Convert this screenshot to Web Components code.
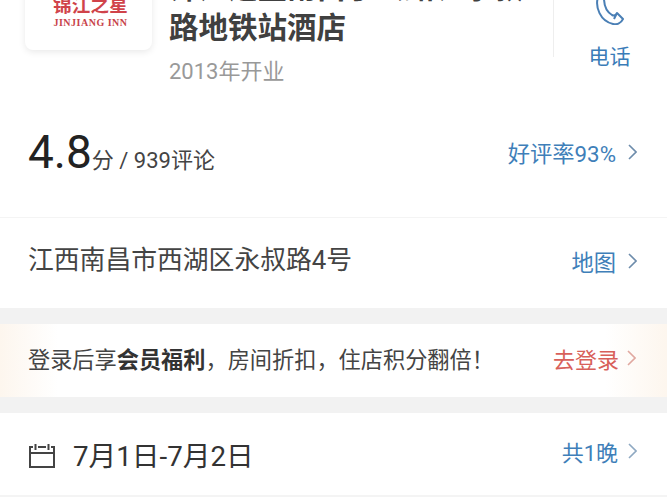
<!DOCTYPE html>
<html lang="zh">
  <head>
    <meta charset="UTF-8" />
    <title>Hotel detail</title>
    <style>
      html, body { margin: 0; height: 500px; overflow: hidden; background: #fff; }
      body {
        font-family: Roboto, "Noto Sans CJK SC", sans-serif;
        color: #333;
      }
    </style>
  </head>
  <body>
    <hotel-header name="锦江之星南昌丁公路、永叔路地铁站酒店" opened="2013年开业"></hotel-header>
    <info-row kind="score" link="好评率93%">
      <span><span style="font-size:46px;color:#222">4.8</span><span style="font-size:22px;color:#444">分 / 939评论</span></span>
    </info-row>
    <info-row kind="address" link="地图"><span style="font-size:25.8px;color:#444">江西南昌市西湖区永叔路4号</span></info-row>
    <section-gap></section-gap>
    <login-banner></login-banner>
    <section-gap></section-gap>
    <date-row></date-row>

    <script>
      const chevron = (color) => `<svg width="9" height="16" viewBox="0 0 9 16" fill="none" stroke="${color}" stroke-width="1.6"><path d="M1 1l7 7-7 7"/></svg>`;

      class HotelHeader extends HTMLElement {
        constructor() {
          super();
          this.attachShadow({ mode: "open" }).innerHTML = `
            <style>
              :host { display: flex; height: 122px; margin-top: -32px; padding-left: 25px; box-sizing: border-box; }
              .logo { width: 127px; height: 82px; background: #fff; border-radius: 8px; box-shadow: 0 2px 7px rgba(0,0,0,.09);
                display: flex; flex-direction: column; align-items: center; justify-content: flex-end; padding: 0 0 21px 4px; box-sizing: border-box; flex: none; }
              .cn { font-size: 18.5px; line-height: 20px; font-weight: 700; color: #d0434a; letter-spacing: 0.2px; }
              .en { font-family: "Liberation Serif", serif; font-size: 10px; line-height: 12px; font-weight: 700; color: #c8434a; letter-spacing: .5px; margin-top: 1px; }
              .text { width: 360px; margin-left: 17px; flex: none; }
              .name { font-size: 29.5px; line-height: 40px; font-weight: 700; color: #404040; }
              .opened { font-size: 22px; line-height: 28px; color: #999; margin-top: 10px; }
              .divider { width: 1px; height: 89px; margin-left: 24px; background: #eee; flex: none; }
              .call { flex: 1; display: flex; flex-direction: column; align-items: center; padding-right: 2px; }
              .call svg { margin-top: 27px; }
              .call span { font-size: 21px; line-height: 28px; color: #3a7cb8; margin-top: 18px; }
            </style>
            <div class="logo"><span class="cn">锦江之星</span><span class="en">JINJIANG INN</span></div>
            <div class="text">
              <div class="name"></div>
              <div class="opened"></div>
            </div>
            <div class="divider"></div>
            <div class="call">
              <svg width="30" height="30" viewBox="0 0 30 30" fill="none" stroke="#4a7fb5" stroke-width="2" stroke-linejoin="round">
                <path d="M3 2C0 12 5 26 18 29c4 1 8-1 10-5l-6-6c-1 2-3 3-5 2C12 17 9 12 9 3M22 18l-3 6"/>
              </svg>
              <span>电话</span>
            </div>`;
          this.shadowRoot.querySelector(".name").textContent = this.getAttribute("name");
          this.shadowRoot.querySelector(".opened").textContent = this.getAttribute("opened");
        }
      }
      customElements.define("hotel-header", HotelHeader);

      class InfoRow extends HTMLElement {
        constructor() {
          super();
          const score = this.getAttribute("kind") === "score";
          this.attachShadow({ mode: "open" }).innerHTML = `
            <style>
              :host { display: flex; align-items: center; justify-content: space-between; box-sizing: border-box;
                height: ${score ? 128 : 90}px; padding: 0 30px 0 28px; border-bottom: ${score ? "1px solid #f4f4f4" : "0"}; }
              .main { margin-bottom: ${score ? 3 : 12}px; }
              .link { display: flex; align-items: center; gap: 12px; font-size: 22.3px; color: #3f7fb9; margin-bottom: 4px; }
            </style>
            <div class="main"><slot></slot></div>
            <div class="link"><span></span>${chevron("#6d8cab")}</div>`;
          this.shadowRoot.querySelector(".link span").textContent = this.getAttribute("link");
        }
      }
      customElements.define("info-row", InfoRow);

      class SectionGap extends HTMLElement {
        constructor() {
          super();
          this.attachShadow({ mode: "open" }).innerHTML = `<style>:host { display: block; height: 16px; background: #f2f2f2; }</style>`;
        }
      }
      customElements.define("section-gap", SectionGap);

      class LoginBanner extends HTMLElement {
        constructor() {
          super();
          this.attachShadow({ mode: "open" }).innerHTML = `
            <style>
              :host { display: flex; align-items: center; justify-content: space-between; height: 73px; padding: 0 31px 5px 28px; box-sizing: border-box;
                background: linear-gradient(90deg, #fdf6ee 0, #fff 58px, #fff 605px, #fdf6ee 100%); }
              .msg { font-size: 22.2px; color: #444; }
              b { font-weight: 700; color: #333; }
              .go { display: flex; align-items: center; gap: 8px; font-size: 22px; color: #d8605a; }
            </style>
            <div class="msg">登录后享<b>会员福利</b>，房间折扣，住店积分翻倍！</div>
            <div class="go"><span>去登录</span>${chevron("#e0a8a0")}</div>`;
        }
      }
      customElements.define("login-banner", LoginBanner);

      class DateRow extends HTMLElement {
        constructor() {
          super();
          this.attachShadow({ mode: "open" }).innerHTML = `
            <style>
              :host { display: flex; align-items: center; height: 84px; padding: 0 30px 6px 29px; box-sizing: border-box; border-bottom: 2px solid #f4f4f4; }
              svg.cal { flex: none; margin-top: 8px; }
              .dates { font-size: 27.7px; color: #333; margin-left: 18px; flex: 1; margin-top: 6px; }
              .link { display: flex; align-items: center; gap: 10px; font-size: 22px; color: #3f7fb9; }
            </style>
            <svg class="cal" width="26" height="25" viewBox="0 0 26 25" fill="none" stroke="#444" stroke-width="2">
              <path d="M4 4H1v20h24V4h-3M9 4h8M1 10h24M6.500 1v6M19.500 1v6"/>
            </svg>
            <div class="dates">7月1日-7月2日</div>
            <div class="link"><span>共1晚</span>${chevron("#8fa9c2")}</div>`;
        }
      }
      customElements.define("date-row", DateRow);
    </script>
  </body>
</html>
